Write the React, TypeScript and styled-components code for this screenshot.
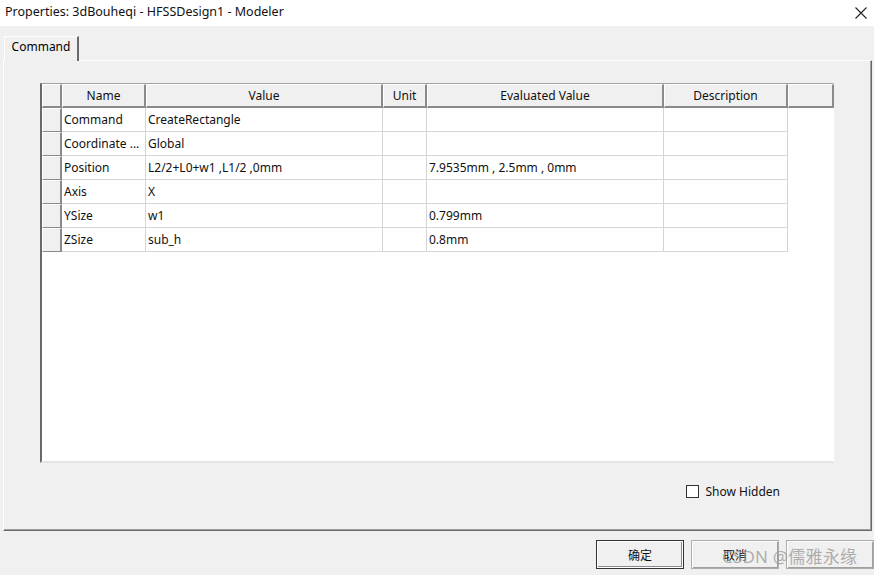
import React from "react";
import styled, { createGlobalStyle } from "styled-components";

const Global = createGlobalStyle`
  *, *::before, *::after { box-sizing: border-box; }
  html, body { margin: 0; padding: 0; }
  body {
    width: 874px; height: 575px; overflow: hidden;
    background: #f0f0f0;
    font-family: "Noto Sans", "Noto Sans CJK SC", sans-serif;
    color: #000;
  }
  #root { width: 874px; height: 575px; }
`;

const Window = styled.div`
  width: 874px;
  height: 575px;
  display: flex;
  flex-direction: column;
  position: relative;
  overflow: hidden;
  background: #f0f0f0;
`;

const TitleBar = styled.div`
  height: 26px;
  flex: none;
  background: #fff;
  display: flex;
  align-items: center;
  justify-content: space-between;
  padding: 0 6px 3px 5px;
  font-size: 12.5px;
  color: #111;
`;

const CloseIcon = styled.svg`
  width: 12px;
  height: 12px;
  margin-right: 1px;
  margin-top: 2px;
`;

const Body = styled.div`
  flex: 1;
  display: flex;
  flex-direction: column;
  padding: 10px 2px 0 3px;
`;

const TabStrip = styled.div`
  display: flex;
  height: 24px;
  padding-left: 1px;
  position: relative;
  z-index: 1;
`;

const Tab = styled.div`
  width: 75px;
  height: 25px;
  border-top: 1px solid #fff;
  border-left: 1px solid #fff;
  border-right: 2px solid #696969;
  background: #f0f0f0;
  font-size: 12px;
  display: flex;
  align-items: center;
  justify-content: center;
  padding-bottom: 5px;
`;

const Panel = styled.div`
  height: 471px;
  border-top: 1px solid #fff;
  border-left: 1px solid #fff;
  border-right: 1px solid #696969;
  border-bottom: 1px solid #696969;
  box-shadow: inset -1px -1px 0 #a0a0a0;
  display: flex;
  flex-direction: column;
  padding: 22px 0 0 36px;
`;

const Grid = styled.div`
  width: 794px;
  height: 380px;
  border-top: 1px solid #a0a0a0;
  border-left: 2px solid #696969;
  border-right: 1px solid #fff;
  border-bottom: 2px solid #e3e3e3;
  background: #fff;
  display: grid;
  grid-template-columns: 20px 84px 237px 44px 237px 124px 46px;
  grid-auto-rows: 24px;
  align-content: start;
  font-size: 12px;
`;

const HeadCell = styled.div`
  background: #f0f0f0;
  border-top: 1px solid #fff;
  border-left: 1px solid #fff;
  border-right: 2px solid #8a8a8a;
  border-bottom: 2px solid #8a8a8a;
  display: flex;
  align-items: center;
  justify-content: center;
  color: #111;
  padding-bottom: 1px;
`;

const RowHead = styled.div`
  background: #f0f0f0;
  border-top: 1px solid #fff;
  border-left: 1px solid #fff;
  border-right: 2px solid #8a8a8a;
  border-bottom: 1px solid #8a8a8a;
`;

const Cell = styled.div<{ $empty?: boolean }>`
  border-right: ${(p) => (p.$empty ? "none" : "1px solid #d4d4d4")};
  border-bottom: ${(p) => (p.$empty ? "none" : "1px solid #d4d4d4")};
  display: flex;
  align-items: center;
  padding: 0 0 1px 2px;
  white-space: nowrap;
  overflow: hidden;
  color: #111;
`;

const Footer = styled.div`
  display: flex;
  justify-content: flex-end;
  align-items: center;
  gap: 6px;
  margin-top: 20px;
  padding-right: 91px;
  font-size: 12px;
  color: #111;
`;

const CheckBox = styled.span`
  width: 13px;
  height: 13px;
  border: 1px solid #333;
  background: #fff;
`;

const ButtonRow = styled.div`
  display: flex;
  gap: 7px;
  padding: 9px 0 0 593px;
`;

const Button = styled.div<{ $default?: boolean }>`
  flex: none;
  width: 88px;
  height: 29px;
  border: 1px solid ${(p) => (p.$default ? "#333" : "#adadad")};
  box-shadow: ${(p) =>
    p.$default ? "inset 0 0 0 1px #fff, inset -1px -1px 0 1px #8a8a8a" : "inset 1px 1px 0 #fff, inset -1px -1px 0 #a0a0a0"};
  background: #f0f0f0;
  display: flex;
  align-items: center;
  justify-content: center;
  font-family: "Noto Sans CJK SC", sans-serif;
  font-size: 12px;
  color: #111;
`;

const Watermark = styled.div`
  position: absolute;
  left: 722px;
  top: 543px;
  font-family: "Noto Sans", "Noto Sans CJK SC", sans-serif;
  font-size: 17px;
  color: rgba(150, 150, 150, 0.75);
  pointer-events: none;
  letter-spacing: 0.2px;
`;

const columns = ["Name", "Value", "Unit", "Evaluated Value", "Description", ""];

const rows: string[][] = [
  ["Command", "CreateRectangle", "", "", ""],
  ["Coordinate ...", "Global", "", "", ""],
  ["Position", "L2/2+L0+w1 ,L1/2 ,0mm", "", "7.9535mm , 2.5mm , 0mm", ""],
  ["Axis", "X", "", "", ""],
  ["YSize", "w1", "", "0.799mm", ""],
  ["ZSize", "sub_h", "", "0.8mm", ""],
];

export default function App() {
  return (
    <Window>
      <Global />
      <TitleBar>
        <span>Properties: 3dBouheqi - HFSSDesign1 - Modeler</span>
        <CloseIcon viewBox="0 0 12 12">
          <path d="M0.5 0.5 L11.5 11.5 M11.5 0.5 L0.5 11.5" stroke="#222" strokeWidth="1.1" fill="none" />
        </CloseIcon>
      </TitleBar>
      <Body>
        <TabStrip>
          <Tab>Command</Tab>
        </TabStrip>
        <Panel>
          <Grid>
            <HeadCell />
            {columns.map((c, i) => (
              <HeadCell key={i}>{c}</HeadCell>
            ))}
            {rows.map((r, ri) => (
              <React.Fragment key={ri}>
                <RowHead />
                {r.map((v, ci) => (
                  <Cell key={ci}>{v}</Cell>
                ))}
                <Cell $empty />
              </React.Fragment>
            ))}
          </Grid>
          <Footer>
            <CheckBox />
            <span>Show Hidden</span>
          </Footer>
        </Panel>
        <ButtonRow>
          <Button $default>确定</Button>
          <Button>取消</Button>
          <Button />
        </ButtonRow>
      </Body>
      <Watermark>CSDN @儒雅永缘</Watermark>
    </Window>
  );
}
